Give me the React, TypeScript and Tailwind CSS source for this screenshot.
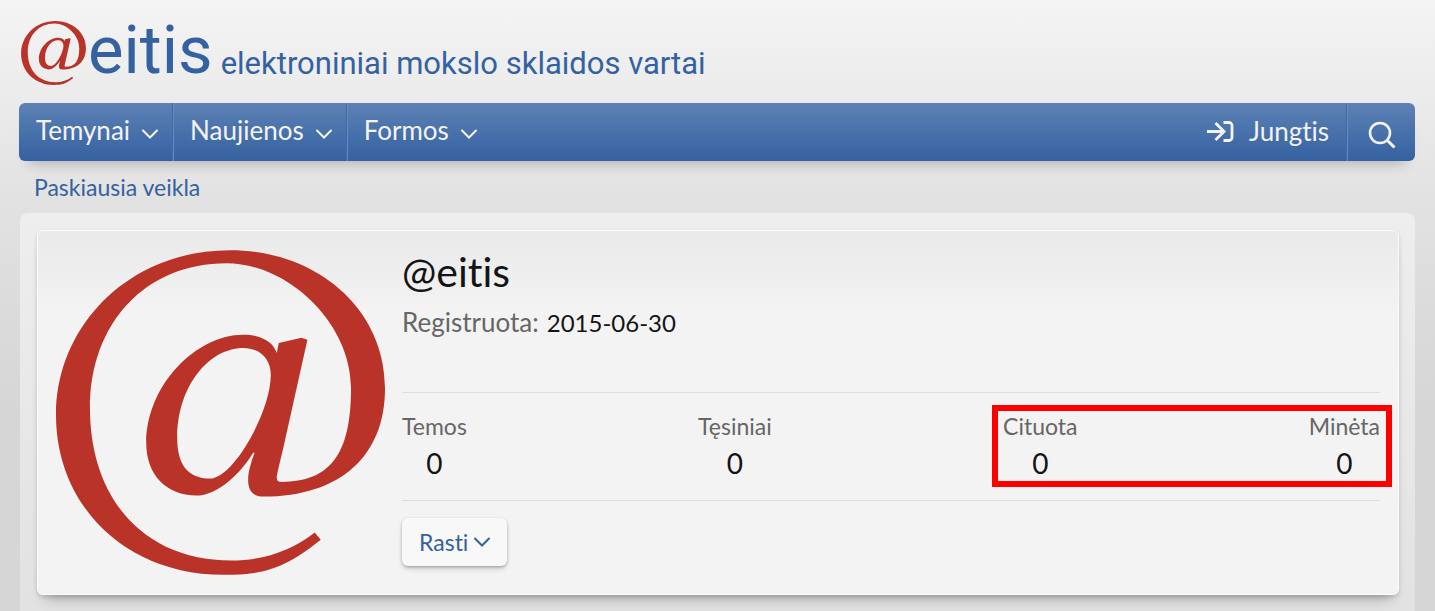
import type { ReactNode } from 'react';

const menuItems = ['Temynai', 'Naujienos', 'Formos'];

const stats = [
	{ label: 'Temos', value: 0 },
	{ label: 'Tęsiniai', value: 0 },
	{ label: 'Cituota', value: 0 },
	{ label: 'Minėta', value: 0 },
];

const AtMark = ({ className }: { className: string }) => (
	<svg
		viewBox="78 75 988 975"
		className={className}
		fill="#ba3329"
		fillRule="evenodd"
		aria-hidden="true"
	>
		<path d="M855 923L873 945C760 1035 700 1050 580 1050C290 1050 78 845 78 570C78 300 300 75 600 75C860 75 1066 250 1066 490C1066 690 935 815 700 815C670 815 655 797 655 765C655 740 663 715 674 683L670 683C620 765 550 812 500 812C410 812 349 750 349 655C349 480 500 329 640 329C695 329 730 350 741 384L747 354L815 338L833 344L767 640C752 710 741 745 741 760C741 768 745 771 755 771C900 771 964 690 964 490C964 290 770 114 590 114C350 114 180 290 180 550C180 820 340 1007 605 1007C700 1007 785 978 855 923ZM640 369C690 369 723 400 723 450C723 560 610 761 540 761C475 761 442 720 442 640C442 480 540 369 640 369Z" />
	</svg>
);

const Chevron = ({ className }: { className: string }) => (
	<svg
		viewBox="0 0 16 10"
		className={className}
		fill="none"
		stroke="currentColor"
		strokeWidth="2"
		strokeLinecap="round"
		aria-hidden="true"
	>
		<path d="M1 1.5l7 7 7-7" />
	</svg>
);

const MenuButton = ({ children }: { children: ReactNode }) => (
	<button
		type="button"
		className="flex items-center gap-3 pl-[17px] pr-[14px] shadow-[1px_0_#3e69a5,2px_0_#668bbd] last:shadow-none"
	>
		<span className="pb-1">{children}</span>
		<Chevron className="w-4 h-2.5 mt-1" />
	</button>
);

export default function App() {
	return (
		<div className="min-h-screen bg-[linear-gradient(#f4f4f4,#e2e2e2_200px,#d6d6d6_400px)] font-['Lato',sans-serif] text-[#141414] [font-variant-ligatures:none]">
			<header className="px-[21px]">
				<a
					href="#"
					className="flex items-start h-[103px] font-['Roboto',sans-serif] text-[#3461a0]"
				>
					<AtMark className="w-[65px] h-16 mt-[21px]" />
					<span className="ml-0.5 mt-2 text-[67px] leading-[84px]">eitis</span>
					<span className="ml-2 mt-[43px] text-[31px] leading-[42px]">
						elektroniniai mokslo sklaidos vartai
					</span>
				</a>
			</header>

			<nav className="flex justify-between h-[58px] ml-[19px] mr-5 rounded-md bg-linear-to-b from-[#5d82b5] to-[#3461a0] text-[#f3f3f3] text-[26px] shadow-[0_12px_14px_-10px_rgba(0,0,0,0.25)]">
				<div className="flex gap-px">
					{menuItems.map((item) => (
						<MenuButton key={item}>{item}</MenuButton>
					))}
				</div>
				<div className="flex">
					<a href="#" className="flex items-center gap-[15px] pr-[17px] pb-0.5">
						<svg
							viewBox="0 0 27 21"
							className="w-[27px] h-[21px]"
							fill="none"
							stroke="currentColor"
							strokeWidth="2.8"
							aria-hidden="true"
						>
							<path d="M0 10.5h17M8.5 2l8.5 8.5L8.500 19M16.500 1.500H22a3 3 0 0 1 3 3v12a3 3 0 0 1-3 3h-5.500" />
						</svg>
						<span>Jungtis</span>
					</a>
					<button
						type="button"
						aria-label="Paieška"
						className="flex items-center justify-center w-[69px] pt-1.5 pl-0.5 border-l border-[#3e69a5] shadow-[inset_1px_0_#668bbd]"
					>
						<svg
							viewBox="0 0 28 28"
							className="w-7 h-7"
							fill="none"
							stroke="currentColor"
							strokeWidth="2.6"
							aria-hidden="true"
						>
							<circle cx="12" cy="12" r="10" />
							<path d="M19 19l7.500 7.500" strokeWidth="3" />
						</svg>
					</button>
				</div>
			</nav>

			<div className="flex items-start h-[52px] pt-2.5 px-[34px] text-[23px] leading-8 text-[#3461a0]">
				<a href="#">Paskiausia veikla</a>
			</div>

			<main className="mx-5 pt-[17px] pl-[17px] pr-4 min-h-[398px] rounded-t-lg bg-[linear-gradient(#eeeeee,#e2e2e2)]">
				<section className="flex items-start gap-[17px] p-[18px] pb-[19px] border border-[#fbfbfb] rounded-md bg-[linear-gradient(#e9e9e9,#f3f3f3_80px)] shadow-[0_2px_4px_rgba(0,0,0,0.15),0_12px_12px_-8px_rgba(0,0,0,0.25)]">
					<AtMark className="shrink-0 w-[329px] h-[325px] mt-px" />
					<div className="flex-1">
						<h1 className="text-[41px] leading-[46px]">@eitis</h1>
						<p className="flex items-baseline gap-2 mt-[9px] text-[26px] leading-9 text-[#666666]">
							Registruota:
							<time className="text-[24px] text-[#141414]">2015-06-30</time>
						</p>
						<div className="relative mt-[51px] border-y border-[#dddddd]">
							<dl className="flex justify-between pt-[15px] pb-[18px] text-center">
								{stats.map(({ label, value }) => (
									<div key={label}>
										<dt className="text-[23px] leading-9 text-[#666666]">
											{label}
										</dt>
										<dd className="text-[28px] leading-[38px]">{value}</dd>
									</div>
								))}
							</dl>
							<div className="absolute top-3 -right-3 w-[400px] h-[82px] border-6 border-[#ff0000]" />
						</div>
						<button
							type="button"
							className="flex items-center gap-1.5 mt-[17px] h-12 px-[17px] rounded-md bg-[#f8f8f8] text-[23px] text-[#3461a0] shadow-[0_1px_3px_rgba(0,0,0,0.25),0_4px_6px_-2px_rgba(0,0,0,0.2)]"
						>
							Rasti
							<Chevron className="w-4 h-2.5" />
						</button>
					</div>
				</section>
			</main>
		</div>
	);
}
